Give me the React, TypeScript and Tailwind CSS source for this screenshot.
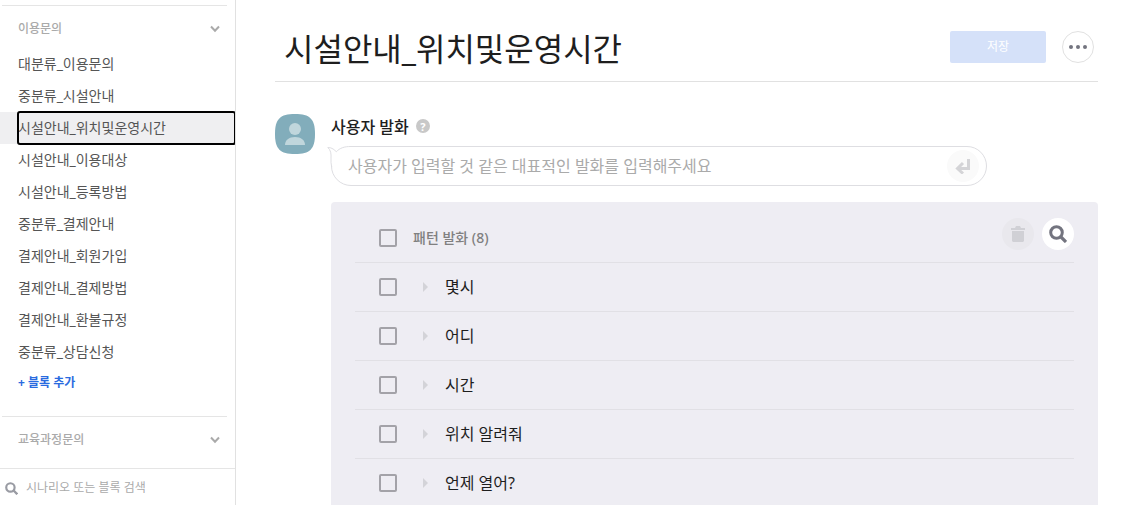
const blocks = [
  '대분류_이용문의',
  '중분류_시설안내',
  '시설안내_위치및운영시간',
  '시설안내_이용대상',
  '시설안내_등록방법',
  '중분류_결제안내',
  '결제안내_회원가입',
  '결제안내_결제방법',
  '결제안내_환불규정',
  '중분류_상담신청',
]

const patterns = ['몇시', '어디', '시간', '위치 알려줘', '언제 열어?']

const selected = '시설안내_위치및운영시간'

const checkboxClass =
  'block size-[18px] shrink-0 appearance-none rounded-xs border-2 border-[#a3a2a8] checked:bg-[#a3a2a8]'

function SearchIcon({ className }: { className: string }) {
  return (
    <svg viewBox="0 0 18 18" className={className} fill="none" stroke="currentColor" aria-hidden="true">
      <circle cx="7.5" cy="7.5" r="5.8" strokeWidth="3" />
      <path d="M11.5 11.5l5.500 5.500" strokeWidth="3.2" />
    </svg>
  )
}

function CategoryHeader({ title }: { title: string }) {
  return (
    <button
      type="button"
      className="ml-0.5 mr-2 flex h-[43px] w-[calc(100%-10px)] items-center justify-between border-t border-[#e5e5e5] pl-4 pr-[7px] pt-1 text-xs font-medium text-[#aaaaaa]"
    >
      {title}
      <svg viewBox="0 0 10 8" className="h-2 w-2.5" fill="none" stroke="currentColor" strokeWidth="2" aria-hidden="true">
        <path d="M1 1.5l4 4.2 4-4.2" />
      </svg>
    </button>
  )
}

function Sidebar() {
  return (
    <aside className="flex w-[236px] shrink-0 flex-col border-r border-[#e1e1e1]">
      <nav className="min-h-0 flex-1 overflow-hidden pt-[5px]">
        <CategoryHeader title="이용문의" />
        <ul>
          {blocks.map((block) => (
            <li key={block} className={block === selected ? 'bg-[#efeff1] pl-[18px]' : 'pl-[18px]'}>
              <button
                type="button"
                className={
                  block === selected
                    ? 'relative block h-8 w-full rounded-xs text-left text-sm text-[#555555] outline-2 -outline-offset-1 outline-black'
                    : 'block h-8 w-full text-left text-sm text-[#555555]'
                }
              >
                {block}
              </button>
            </li>
          ))}
        </ul>
        <button type="button" className="mb-[18px] block h-[30px] pl-[18px] text-xs font-bold text-[#2a6be0]">
          + 블록 추가
        </button>
        <CategoryHeader title="교육과정문의" />
      </nav>
      <label className="flex h-[37px] shrink-0 items-center gap-2 border-t border-[#e5e5e5] pl-[5px] pt-0.5 text-[#999ba3]">
        <SearchIcon className="size-[13px] shrink-0" />
        <input
          type="search"
          aria-label="시나리오 또는 블록 검색"
          placeholder="시나리오 또는 블록 검색"
          className="min-w-0 flex-1 text-xs outline-none placeholder:text-[#aaaaaa]"
        />
      </label>
    </aside>
  )
}

function UtteranceInput() {
  return (
    <div className="relative mr-[111px] flex h-10 items-center rounded-full border border-[#dedee2] bg-white pl-4 pr-[7px]">
      {/* speech bubble tail */}
      <svg viewBox="0 0 24 24" className="absolute -left-[5px] -top-px size-6" fill="none" aria-hidden="true">
        <path d="M24 0H0v20h8l16-16z" fill="#fff" />
        <path
          d="M24 .5C17 .5 13 2 9.3 5.700 7.500 4.200 5.500 1.400 .800 1.500 3.800 4 4.300 8 4 12 3.800 15 4 18 4.700 21"
          stroke="#dedee2"
        />
      </svg>
      <input
        type="text"
        id="utterance"
        placeholder="사용자가 입력할 것 같은 대표적인 발화를 입력해주세요"
        className="relative min-w-0 flex-1 text-base outline-none placeholder:text-[#aaaaaa]"
      />
      <button
        type="button"
        aria-label="입력"
        className="flex size-8 shrink-0 items-center justify-center rounded-full bg-[#fafafa] text-[#d4d4d7]"
      >
        <svg viewBox="0 0 16 16" className="size-4" fill="none" stroke="currentColor" strokeWidth="3" aria-hidden="true">
          <path d="M13.500 1v9.500H3M8 5l-5.500 5.500L8 15.500" />
        </svg>
      </button>
    </div>
  )
}

function PatternPanel() {
  return (
    <section className="mt-4 rounded-t bg-[#eeedf3] px-6">
      <div className="flex h-[61px] items-start border-b border-[#e1e0e5] pl-6 pt-4">
        <label className="flex h-10 items-center gap-4 text-sm font-medium text-[#808080]">
          <input type="checkbox" className={checkboxClass} />
          패턴 발화 (8)
        </label>
        <div className="ml-auto flex gap-2">
          <button
            type="button"
            aria-label="삭제"
            className="flex size-8 items-center justify-center rounded-full bg-[#e9e8ed] text-[#d0d0d5]"
          >
            <svg viewBox="0 0 14 16" className="h-4 w-3.5" fill="currentColor" aria-hidden="true">
              <path d="M0 2h4l1-2h4l1 2h4v2H0zM1 5h12v10l-1 1H2l-1-1z" />
            </svg>
          </button>
          <button
            type="button"
            aria-label="검색"
            className="flex size-8 items-center justify-center rounded-full bg-white text-[#73747f]"
          >
            <SearchIcon className="size-[18px]" />
          </button>
        </div>
      </div>
      <ul>
        {patterns.map((pattern) => (
          <li key={pattern} className="flex h-[49px] items-center border-b border-[#e1e0e5] pl-6">
            <input type="checkbox" aria-label={pattern} className={checkboxClass} />
            <button type="button" className="flex items-center pl-[26px] text-base text-[#1e1e1e]">
              <svg viewBox="0 0 5 10" className="mr-[17px] h-2.5 w-[5px]" fill="#d3d3d8" aria-hidden="true">
                <path d="M0 0l5 5-5 5z" />
              </svg>
              {pattern}
            </button>
          </li>
        ))}
      </ul>
    </section>
  )
}

export default function App() {
  return (
    <div
      lang="ko"
      className="flex h-screen overflow-hidden bg-white font-['Noto_Sans','Noto_Sans_CJK_KR',sans-serif]"
    >
      <Sidebar />
      <main className="min-w-0 flex-1 overflow-hidden pl-[39px] pr-[34px]">
        <header className="flex h-[82px] items-center justify-between border-b border-[#e1e1e1] pl-[9px] pr-1 pt-3">
          <h1 className="pt-1 text-[32px] leading-10 text-[#1e1e1e]">시설안내_위치및운영시간</h1>
          <div className="flex shrink-0 items-center gap-4">
            <button type="button" disabled className="h-8 w-24 rounded-xs bg-[#d5e1f9] text-xs text-white">
              저장
            </button>
            <button
              type="button"
              aria-label="더보기"
              className="flex size-8 items-center justify-center rounded-full border border-[#e1e1e1] text-[#73747f]"
            >
              <svg viewBox="0 0 18 4" className="h-1 w-[18px]" fill="currentColor" aria-hidden="true">
                <circle cx="2" cy="2" r="2" />
                <circle cx="9" cy="2" r="2" />
                <circle cx="16" cy="2" r="2" />
              </svg>
            </button>
          </div>
        </header>
        <div className="flex gap-4 pt-8">
          <svg viewBox="0 0 40 40" className="size-10 shrink-0" aria-hidden="true">
            <path
              d="M20 0C35 0 40 5 40 20S35 40 20 40 0 35 0 20 5 0 20 0z"
              fill="#82adbb"
            />
            <circle cx="20" cy="15" r="6" fill="#c0d6dc" />
            <path d="M10 31c0-5 4-8 10-8s10 3 10 8z" fill="#c0d6dc" />
          </svg>
          <div className="min-w-0 flex-1">
            <div className="flex h-8 items-start gap-[7px]">
              <label htmlFor="utterance" className="text-base/[26px] font-medium text-[#1e1e1e]">
                사용자 발화
              </label>
              <button
                type="button"
                aria-label="도움말"
                className="mt-[5px] flex size-3.5 items-center justify-center rounded-full bg-[#c8c8c8] text-[11px] font-bold leading-none text-white"
              >
                ?
              </button>
            </div>
            <UtteranceInput />
            <PatternPanel />
          </div>
        </div>
      </main>
    </div>
  )
}
